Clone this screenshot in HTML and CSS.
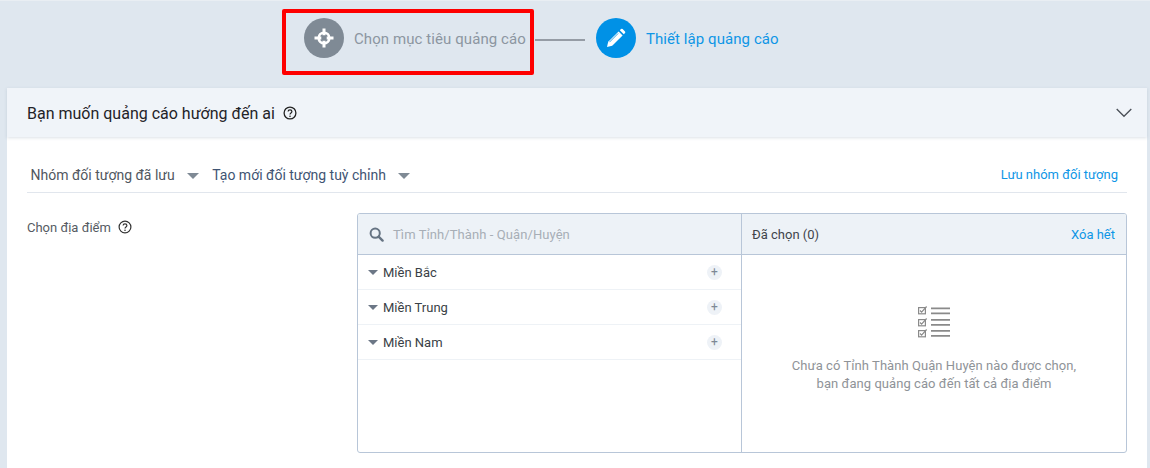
FILE: index.html
```html
<!DOCTYPE html>
<html lang="vi">
<head>
<meta charset="utf-8">
<title>Thiết lập quảng cáo</title>
<link rel="stylesheet" href="styles.css">
</head>
<body>
<div class="steps">
  <div class="step step-muted">
    <span class="step-icon icon-grey">
      <svg width="22" height="22" viewBox="0 0 22 22"><circle cx="11" cy="11" r="5.300" fill="none" stroke="#fff" stroke-width="2.600"/><path d="M9.500 1.500h3v6.800h-3zM9.500 13.700h3v6.800h-3zM1.500 9.500h6.800v3H1.500zM13.700 9.500h6.800v3h-6.800z" fill="#fff"/></svg>
    </span>
    <span class="step-label">Chọn mục tiêu quảng cáo</span>
    <span class="highlight"></span>
  </div>
  <span class="step-line"></span>
  <div class="step step-active">
    <span class="step-icon icon-blue">
      <svg width="20" height="20" viewBox="0 0 20 20"><path d="M1 19l1.200-5.200L12.600 3.400l4 4L6.200 17.800 1 19z" fill="#fff"/><path d="M13.800 2.200l1.200-1.200q.8-.7 1.600 0l2.400 2.400q.7.8 0 1.600l-1.200 1.200-4-4z" fill="#fff"/><path d="M3.400 14.200l8.800-8.800" stroke="#0091e6" stroke-width=".8"/></svg>
    </span>
    <span class="step-label">Thiết lập quảng cáo</span>
  </div>
</div>

<main class="card">
  <header class="card-head">
    <h2 class="card-title">Bạn muốn quảng cáo hướng đến ai</h2>
    <svg class="help help-lg" viewBox="0 0 14 14"><circle cx="7" cy="7" r="5.900" fill="none" stroke="#222" stroke-width="1.300"/><path d="M5.100 5.600C5.100 4.500 6 3.900 7 3.900s1.900.6 1.900 1.600c0 1.500-1.900 1.400-1.900 3" fill="none" stroke="#222" stroke-width="1.200"/><circle cx="7" cy="10.200" r=".8" fill="#222"/></svg>
    <svg class="chevron" width="16" height="10" viewBox="0 0 16 10"><path d="M.7 1l7.300 7.300L15.300 1" fill="none" stroke="#4a4f57" stroke-width="1.300"/></svg>
  </header>
  <div class="card-body">
    <div class="toolbar">
      <span class="menu menu-first">Nhóm đối tượng đã lưu<i class="caret caret-menu"></i></span>
      <span class="menu menu-second">Tạo mới đối tượng tuỳ chỉnh<i class="caret caret-menu"></i></span>
      <a class="link save-link">Lưu nhóm đối tượng</a>
    </div>
    <div class="field">
      <div class="field-label">Chọn địa điểm
        <svg class="help" viewBox="0 0 14 14"><circle cx="7" cy="7" r="5.900" fill="none" stroke="#333" stroke-width="1.200"/><path d="M5.100 5.600C5.100 4.500 6 3.900 7 3.900s1.900.6 1.900 1.600c0 1.500-1.900 1.400-1.900 3" fill="none" stroke="#333" stroke-width="1.200"/><circle cx="7" cy="10.200" r=".8" fill="#333"/></svg>
      </div>
      <div class="picker">
        <section class="pane pane-left">
          <div class="pane-head">
            <svg class="search" width="15" height="15" viewBox="0 0 15 15"><circle cx="6.200" cy="6.200" r="4.600" fill="none" stroke="#667483" stroke-width="2"/><path d="M9.600 9.600l4 4" stroke="#667483" stroke-width="2.400" stroke-linecap="round"/></svg>
            <span class="placeholder">Tìm Tỉnh/Thành - Quận/Huyện</span>
          </div>
          <div class="row"><i class="caret caret-row"></i><span class="row-name">Miền Bắc</span><span class="plus">+</span></div>
          <div class="row"><i class="caret caret-row"></i><span class="row-name">Miền Trung</span><span class="plus">+</span></div>
          <div class="row"><i class="caret caret-row"></i><span class="row-name">Miền Nam</span><span class="plus">+</span></div>
        </section>
        <section class="pane pane-right">
          <div class="pane-head head-right">
            <span class="selected">Đã chọn (0)</span>
            <a class="link">Xóa hết</a>
          </div>
          <div class="empty">
            <svg class="empty-icon" width="34" height="34" viewBox="0 0 34 34">
              <g fill="none" stroke="#8a8a8a" stroke-width="1.200">
                <rect x="1.600" y="3.600" width="6.800" height="6.200"/><rect x="1.600" y="15.600" width="6.800" height="6.200"/><rect x="1.600" y="26.600" width="6.800" height="6.200"/>
                <path d="M3 6.500l1.600 1.600L9.600 2.500M3 18.500l1.600 1.600 5-5.600M3 29.500l1.600 1.600 5-5.600"/>
              </g>
              <path d="M14 3.500h19v1.800H14zM14 8.500h19v1.800H14zM14 15h19v1.800H14zM14 20h19v1.800H14zM14 26h19v1.800H14zM14 31h19v1.800H14z" fill="#8a8a8a"/>
            </svg>
            <p class="empty-text">Chưa có Tỉnh Thành Quận Huyện nào được chọn,<br>bạn đang quảng cáo đến tất cả địa điểm</p>
          </div>
        </section>
      </div>
    </div>
  </div>
</main>
</body>
</html>
```
FILE: styles.css
```css
* { box-sizing: border-box; }
html, body { height: 100%; }
body {
  margin: 0;
  height: 468px;
  overflow: hidden;
  background: #dfe7ef;
  font-family: Roboto, "Noto Sans", sans-serif;
  font-size: 13px;
  color: #2b2f36;
}
.steps {
  display: flex;
  align-items: center;
  height: 88px;
  padding: 0 0 13px 304px;
  border-top: 1px solid #e9eef3;
}
.step { position: relative; display: flex; align-items: center; gap: 10px; }
.step-icon {
  width: 40px;
  height: 40px;
  border-radius: 50%;
  display: flex;
  align-items: center;
  justify-content: center;
}
.icon-grey { background: #7f8a95; }
.icon-blue { background: #0091e6; }
.step-label { padding-top: 2px; font-size: 15px; letter-spacing: .08px; }
.step-muted .step-label { color: #8c96a1; }
.step-active .step-label { color: #0e96e6; }
.step-line { width: 50px; height: 2px; margin: 3px 11px 0 9px; background: #959ca5; }
.highlight {
  position: absolute;
  left: -22px;
  top: -9px;
  width: 252px;
  height: 66px;
  border: 4px solid #fe0000;
  border-radius: 2px;
}
.card {
  margin: 0 3px 0 7px;
  height: 380px;
  background: #fff;
}
.card-head {
  display: flex;
  align-items: center;
  gap: 7px;
  height: 49px;
  padding: 0 15px 0 20px;
  background: #f0f4f9;
  box-shadow: 0 1px 3px rgba(120, 140, 165, .25);
}
.card-title { margin: 0; padding-top: 2px; font-size: 16px; font-weight: 400; color: #1f2328; }
.help { width: 14px; height: 14px; flex: none; }
.help-lg { margin: 1px 0 0 1px; }
.chevron { margin-left: auto; }
.card-body { padding: 23px 20px 0; }
.toolbar {
  display: flex;
  align-items: center;
  height: 33px;
  padding-bottom: 3px;
  border-bottom: 1px solid #e1e6ed;
}
.menu { display: flex; align-items: center; font-size: 14px; }
.menu-first { margin-left: 3.500px; color: #51575f; }
.menu-second { margin-left: 13.500px; color: #3f5473; }
.caret { display: block; width: 0; height: 0; border-style: solid; border-color: #7f8a95 transparent transparent; }
.caret-menu { margin-left: 12px; margin-top: 2px; border-width: 6px 6.500px 0; }
.caret-row { border-width: 5px 5.500px 0; border-top-color: #6c7786; }
.link { color: #0e96e6; font-size: 13px; }
.save-link { margin-left: auto; margin-right: 9px; }
.field { display: flex; padding-top: 20px; }
.field-label {
  display: flex;
  align-items: center;
  gap: 7px;
  width: 330px;
  height: 28px;
  color: #555b63;
  font-size: 13px;
}
.picker {
  display: flex;
  width: 770px;
  height: 240px;
  border: 1px solid #b8c6d8;
  border-radius: 3px;
  overflow: hidden;
}
.pane-left { width: 384px; border-right: 1px solid #b8c6d8; }
.pane-right { flex: 1; }
.pane-head {
  display: flex;
  align-items: center;
  height: 41px;
  background: #edf2f7;
  border-bottom: 1px solid #b8c6d8;
  padding: 0 11px;
}
.placeholder { margin-left: 9px; color: #a7aeb6; font-size: 13px; letter-spacing: .08px; }
.head-right { justify-content: space-between; padding: 0 11px 0 10px; }
.selected { color: #3f444b; font-size: 13px; }
.row {
  display: flex;
  align-items: center;
  height: 35px;
  padding: 0 19px 0 10px;
  border-bottom: 1px solid #eef2f6;
}
.row-name { margin-left: 5px; color: #3a3f46; font-size: 13px; }
.plus {
  margin-left: auto;
  width: 15px;
  height: 15px;
  border-radius: 50%;
  background: #eef2f7;
  color: #7d8895;
  font-size: 12px;
  line-height: 15px;
  text-align: center;
}
.empty { display: flex; flex-direction: column; align-items: center; padding-top: 49px; }
.empty-icon { display: block; }
.empty-text { margin: 19px 0 0; color: #8f9398; font-size: 13px; letter-spacing: .06px; line-height: 18px; text-align: center; }
```
